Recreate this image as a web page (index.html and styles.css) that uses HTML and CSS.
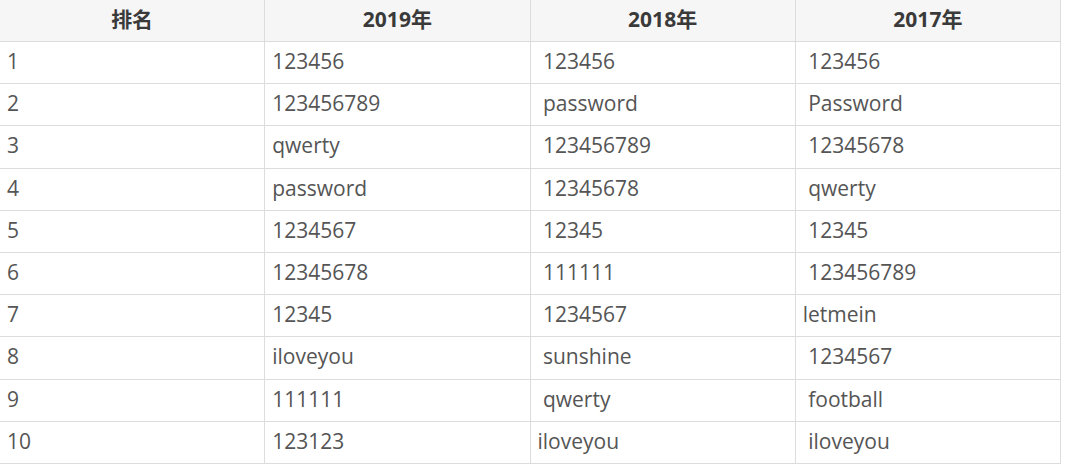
FILE: index.html
```html
<!DOCTYPE html>
<html lang="zh">
<head>
<meta charset="utf-8">
<title>密码排名</title>
<link rel="stylesheet" href="styles.css">
</head>
<body>
<table class="rank">
  <thead>
    <tr><th>排名</th><th>2019年</th><th>2018年</th><th>2017年</th></tr>
  </thead>
  <tbody>
    <tr><td>1</td><td>123456</td><td>&nbsp;123456</td><td>&nbsp;123456</td></tr>
    <tr><td>2</td><td>123456789</td><td>&nbsp;password</td><td>&nbsp;Password</td></tr>
    <tr><td>3</td><td>qwerty</td><td>&nbsp;123456789</td><td>&nbsp;12345678</td></tr>
    <tr><td>4</td><td>password</td><td>&nbsp;12345678</td><td>&nbsp;qwerty</td></tr>
    <tr><td>5</td><td>1234567</td><td>&nbsp;12345</td><td>&nbsp;12345</td></tr>
    <tr><td>6</td><td>12345678</td><td>&nbsp;111111</td><td>&nbsp;123456789</td></tr>
    <tr><td>7</td><td>12345</td><td>&nbsp;1234567</td><td>letmein</td></tr>
    <tr><td>8</td><td>iloveyou</td><td>&nbsp;sunshine</td><td>&nbsp;1234567</td></tr>
    <tr><td>9</td><td>111111</td><td>&nbsp;qwerty</td><td>&nbsp;football</td></tr>
    <tr><td>10</td><td>123123</td><td>iloveyou</td><td>&nbsp;iloveyou</td></tr>
  </tbody>
</table>
</body>
</html>
```
FILE: styles.css
```css
html, body {
  margin: 0;
  padding: 0;
  background: #fff;
}
body {
  font-family: "Open Sans", "Noto Sans CJK SC", sans-serif;
  color: #555;
}
.rank {
  border-collapse: collapse;
  table-layout: fixed;
  width: 1062px;
  margin: -1px 0 0 -1px;
}
.rank th,
.rank td {
  width: 25%;
  border: 1px solid #dcdcdc;
  padding: 0 7px 3px;
  vertical-align: middle;
  white-space: nowrap;
}
.rank th {
  height: 36px;
  padding-bottom: 5px;
  background: #f6f6f6;
  color: #3a3a3a;
  font-size: 21px;
  font-weight: 700;
  text-align: center;
}
.rank td {
  height: 38.2px;
  font-size: 21px;
  text-align: left;
  font-weight: 400;
}
```
